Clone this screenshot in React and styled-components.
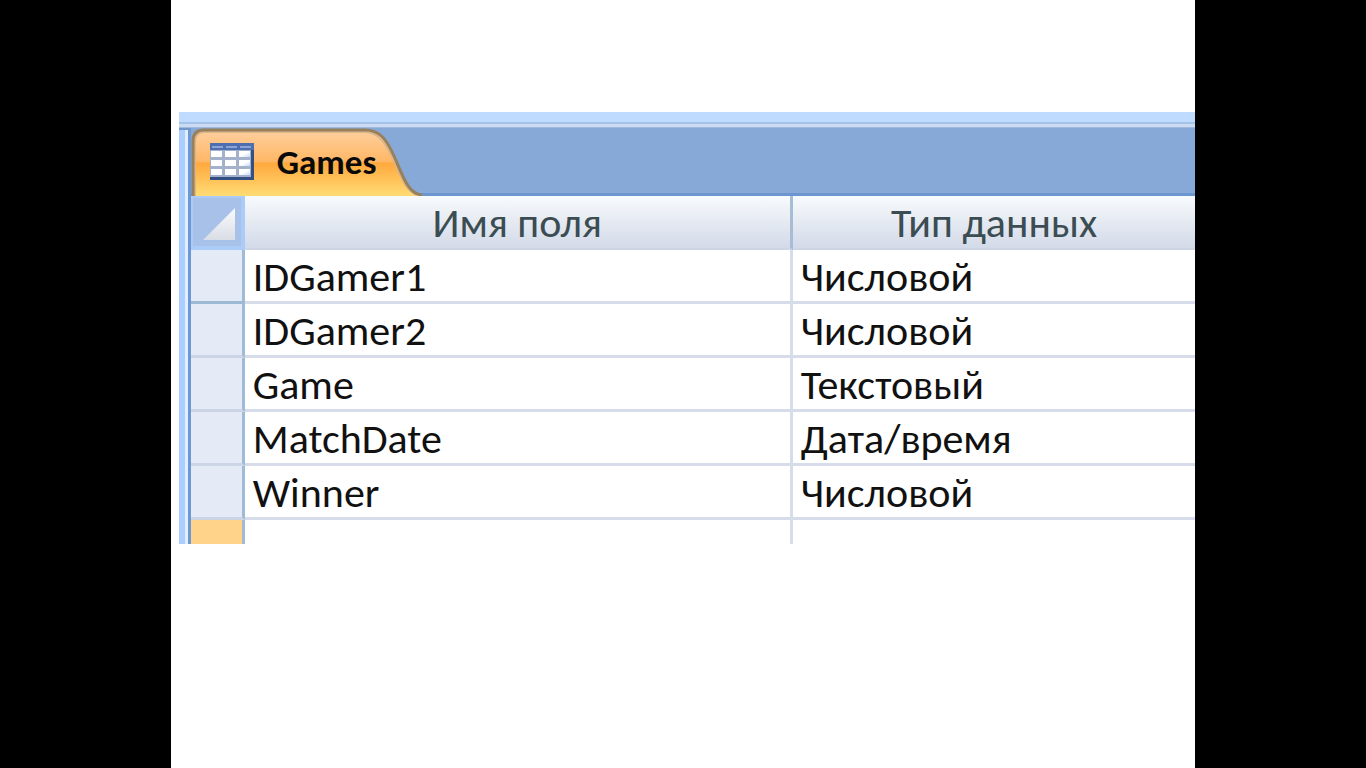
import React from 'react';
import styled, { createGlobalStyle } from 'styled-components';

const GlobalStyle = createGlobalStyle`
  * {
    box-sizing: border-box;
  }

  body {
    margin: 0;
    background-color: #000;
    font-family: Carlito, Lato, "Open Sans", sans-serif;
  }
`;

const Stage = styled.div`
  display: flex;
  justify-content: center;
  min-height: 100vh;
`;

const Slide = styled.main`
  width: 75%;
  padding: 112px 0 0 8px;
  background-color: #fff;
`;

const Ribbon = styled.div`
  height: 16px;
  background: linear-gradient(#bfdbff 10px, #a4c2ea 10px, #a4c2ea 12px, #cbdbf1 12px, #cbdbf1 15px, #a0b9dc 15px);
`;

const Workspace = styled.div`
  display: flex;
`;

const PaneEdge = styled.div`
  width: 12px;
  border-top: 2px solid #7196cc;
  background: linear-gradient(90deg, #a9ceff 6px, #e2eeff 6px, #e2eeff 9px, #6c98d3 9px);
`;

const Document = styled.section`
  flex: 1;
  min-width: 0;
`;

const TabBar = styled.div`
  height: 68px;
  border-bottom: 3px solid #6c96d0;
  background-color: #87a9d7;
`;

const Tab = styled.button`
  position: relative;
  display: flex;
  align-items: center;
  gap: 22px;
  width: 232px;
  height: 68px;
  padding: 0 0 0 18px;
  border: 0;
  background: none;
  color: #0a0a0a;
  font-family: inherit;
  font-size: 35px;
  font-weight: 700;
  line-height: 40px;
`;

const TabShape = styled.svg`
  position: absolute;
  top: 0;
  left: 0;
`;

const TableIcon = styled.svg`
  position: relative;
  flex: none;
`;

const TabLabel = styled.span`
  position: relative;
`;

const Grid = styled.table`
  width: 100%;
  table-layout: fixed;
  border-collapse: separate;
  border-spacing: 0;
`;

const GutterColumn = styled.col`
  width: 54px;
`;

const NameColumn = styled.col`
  width: 548px;
`;

const HeaderCell = styled.th`
  height: 54px;
  padding: 2px 0 0;
  border-right: ${({ $last }) => ($last ? '0' : '3px solid #a6bdd8')};
  border-bottom: 2px solid #ced5e4;
  background: linear-gradient(#f8fbfd, #e5eaf2 50%, #d3dae8);
  color: #3b4d52;
  font-size: 42px;
  font-weight: 400;
  line-height: 44px;
`;

const CornerCell = styled.th`
  height: 54px;
  padding: 0;
`;

const SelectAll = styled.button`
  display: flex;
  align-items: flex-end;
  justify-content: flex-end;
  width: 100%;
  height: 54px;
  padding: 0 6px 6px 0;
  border: solid #abccf8;
  border-width: 2px 4px 4px 2px;
  background-color: #a7c1e8;
`;

const Gutter = styled.th`
  height: ${({ $isNew }) => ($isNew ? '24px' : '54px')};
  padding: 0;
  border-right: 3px solid #a0bbd8;
  border-bottom: ${({ $isNew, $current }) =>
    $isNew ? '0' : `3px solid ${$current ? '#9dbad5' : '#cbd5e5'}`};
  background-color: ${({ $isNew }) => ($isNew ? '#ffd38a' : '#e4ebf6')};
`;

const Cell = styled.td`
  height: ${({ $isNew }) => ($isNew ? '24px' : '54px')};
  padding: ${({ $isNew }) => ($isNew ? '0' : '2px 0 0 8px')};
  border-right: ${({ $last }) => ($last ? '0' : '3px solid #d6dce9')};
  border-bottom: ${({ $isNew }) => ($isNew ? '0' : '3px solid #d6dce9')};
  background-color: #fff;
  color: #111;
  font-size: 42px;
  line-height: 44px;
  white-space: nowrap;
`;

const fields = [
  { name: 'IDGamer1', type: 'Числовой' },
  { name: 'IDGamer2', type: 'Числовой' },
  { name: 'Game', type: 'Текстовый' },
  { name: 'MatchDate', type: 'Дата/время' },
  { name: 'Winner', type: 'Числовой' },
];

const DatasheetIcon = () => (
  <TableIcon width="46" height="38" viewBox="0 0 46 38" aria-hidden="true">
    <defs>
      <linearGradient id="sheetCell" x1="0" y1="0" x2="1" y2="1">
        <stop offset="0.5" stopColor="#fff" />
        <stop offset="1" stopColor="#c4dbff" />
      </linearGradient>
    </defs>
    <path d="M1 0h44v37H1z" fill="#344f83" />
    <path d="M1 0h41v34H1z" fill="#a3b1cd" />
    <path d="M1 0h44v7H1z" fill="#4e6eb2" />
    <path d="M3 3h11v2H3zM17 3h11v2H17zM31 3h11v2H31z" fill="#8ba3d5" />
    {[8, 17, 26].map((y) =>
      [2, 16, 30].map((x) => (
        <rect key={`${x}-${y}`} x={x} y={y} width="11" height="6" fill={x === 30 ? 'url(#sheetCell)' : '#fff'} />
      ))
    )}
  </TableIcon>
);

const DocumentTab = () => (
  <Tab type="button">
    <TabShape width="232" height="68" viewBox="0 0 232 68" aria-hidden="true">
      <defs>
        <linearGradient id="tabFill" x1="0" y1="0" x2="0" y2="1">
          <stop offset="0" stopColor="#ffcf9f" />
          <stop offset="0.48" stopColor="#ffb765" />
          <stop offset="0.5" stopColor="#ffa83d" />
          <stop offset="1" stopColor="#ffdc74" />
        </linearGradient>
      </defs>
      <path
        d="M2 68V13Q2 2 13 2H174C188 2 195 10 203 28C212 48 217 66 230 67V68Z"
        fill="url(#tabFill)"
      />
      <path
        d="M4 68V14Q4 4 14 4H173C186 4 193 12 201 29C210 49 215 64 226 67"
        fill="none"
        stroke="#d8b78a"
        strokeWidth="2"
      />
      <path
        d="M2 68V13Q2 2 13 2H174C188 2 195 10 203 28C212 48 217 66 231 67"
        fill="none"
        stroke="#98805c"
        strokeWidth="3"
      />
    </TabShape>
    <DatasheetIcon />
    <TabLabel>Games</TabLabel>
  </Tab>
);

const App = () => {
  return (
    <>
      <GlobalStyle />
      <Stage>
        <Slide>
          <Ribbon />
          <Workspace>
            <PaneEdge />
            <Document>
              <TabBar>
                <DocumentTab />
              </TabBar>
              <Grid>
                <colgroup>
                  <GutterColumn />
                  <NameColumn />
                  <col />
                </colgroup>
                <thead>
                  <tr>
                    <CornerCell>
                      <SelectAll type="button" aria-label="Выделить все">
                        <svg width="32" height="32" viewBox="0 0 32 32" aria-hidden="true">
                          <defs>
                            <linearGradient id="cornerFill" x1="0" y1="0" x2="0" y2="1">
                              <stop offset="0" stopColor="#fafbfd" />
                              <stop offset="1" stopColor="#d9dde5" />
                            </linearGradient>
                          </defs>
                          <path d="M32 0V32H0Z" fill="url(#cornerFill)" />
                        </svg>
                      </SelectAll>
                    </CornerCell>
                    <HeaderCell scope="col">Имя поля</HeaderCell>
                    <HeaderCell scope="col" $last>Тип данных</HeaderCell>
                  </tr>
                </thead>
                <tbody>
                  {fields.map((field, index) => (
                    <tr key={field.name}>
                      <Gutter scope="row" $current={index === 0} />
                      <Cell>{field.name}</Cell>
                      <Cell $last>{field.type}</Cell>
                    </tr>
                  ))}
                  <tr>
                    <Gutter scope="row" $isNew />
                    <Cell $isNew />
                    <Cell $isNew $last />
                  </tr>
                </tbody>
              </Grid>
            </Document>
          </Workspace>
        </Slide>
      </Stage>
    </>
  );
};

export default App;
